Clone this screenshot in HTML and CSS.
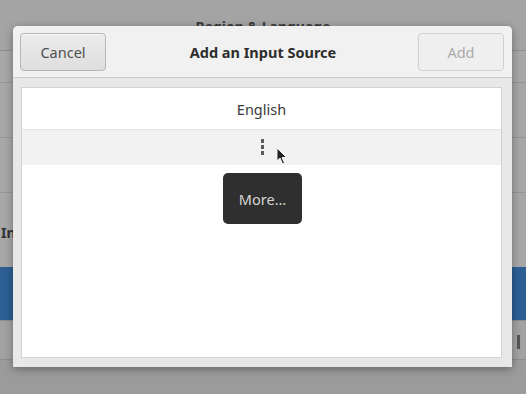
FILE: index.html
```html
<!DOCTYPE HTML>
<html>
  <head>
    <meta charset="utf-8">
    <title>Add an Input Source</title>
    <link rel="stylesheet" href="styles.css">
  </head>
  <body>
    <div class="backdrop">
      <div class="bg-header"><span>Region &amp; Language</span></div>
      <div class="bg-row bg-row-short"></div>
      <div class="bg-row"></div>
      <div class="bg-row"></div>
      <div class="bg-label">Input Sources</div>
      <div class="bg-selected"></div>
      <div class="bg-toolbar"><span class="bg-knob"></span></div>
    </div>

    <div class="dialog">
      <div class="dialog-header">
        <button class="btn">Cancel</button>
        <div class="dialog-title">Add an Input Source</div>
        <button class="btn btn-disabled">Add</button>
      </div>
      <div class="dialog-body">
        <div class="list">
          <div class="list-row">English</div>
          <div class="list-row list-row-hover">
            <span class="dots"><i></i><i></i><i></i></span>
          </div>
        </div>
      </div>
      <div class="tooltip">More&hellip;</div>
      <svg class="cursor" width="13" height="19" viewBox="0 0 13 19">
        <path d="M1 1 L1 14 L4 11 L6.5 17 L8.5 16 L6 10.5 L10.5 10.5 Z" fill="#222" stroke="#f4f4f4" stroke-width="1"/>
      </svg>
    </div>
  </body>
</html>
```

FILE: styles.css
```css
html, body { margin: 0; padding: 0; }
body
{
  width: 526px; height: 394px; overflow: hidden;
  position: relative;
  background-color: #9b9b9b;
  font-family: "Noto Sans", "DejaVu Sans", sans-serif;
  font-size: 14px;
}

/* dimmed settings window behind the dialog */
.backdrop { background-color: #a7a7a7; }
.bg-header
{
  height: 50px; border-bottom: 1px solid #8f8f8f;
  background-color: #a4a4a4;
  display: flex; justify-content: center; align-items: center;
  font-weight: bold; color: #3a3a3a;
}
.bg-header span { margin-top: 2px; }
.bg-row { height: 54px; border-bottom: 1px solid #959595; }
.bg-row-short { height: 31px; }
.bg-label
{
  height: 74px; line-height: 24px; padding-top: 28px; box-sizing: border-box;
  padding-left: 1px;
  font-weight: bold; color: #333;
}
.bg-selected { height: 53px; background-color: #2d5f95; }
.bg-toolbar
{
  height: 38px; border-top: 1px solid #8e8e8e; border-bottom: 1px solid #8e8e8e;
  background-color: #a2a2a2; position: relative;
}
.bg-knob
{
  position: absolute; right: 6px; top: 14px;
  width: 3px; height: 14px; background-color: #555;
}

/* dialog */
.dialog
{
  position: absolute; left: 13px; top: 26px;
  width: 499px; height: 341px;
  background-color: #e8e8e8;
  border-radius: 5px 5px 0 0;
  box-shadow: 0 2px 8px rgba(0,0,0,0.35);
  display: flex; flex-direction: column;
}
.dialog-header
{
  height: 52px; box-sizing: border-box;
  padding: 7px 8px 0 7px;
  background-color: #f1f1f1;
  border-bottom: 1px solid #cbcbcb;
  border-radius: 5px 5px 0 0;
  display: flex; align-items: flex-start; justify-content: space-between;
}
.dialog-title
{
  line-height: 38px; font-weight: bold; color: #2e2e2e; font-size: 14.5px;
  margin-left: 2px;
}
.btn
{
  width: 86px; height: 38px;
  font-family: inherit; font-size: 14.5px; color: #4f4f4f;
  border: 1px solid #b6b6b6; border-radius: 4px;
  background: linear-gradient(#ececec, #dedede);
  box-shadow: inset 0 1px #f8f8f8;
}
.btn-disabled
{
  color: #ababab; background: #efefef; border-color: #d0d0d0;
  box-shadow: none;
}
.dialog-body { flex: 1; padding: 9px 10px 9px 8px; display: flex; }
.list
{
  flex: 1; background-color: #ffffff;
  border: 1px solid #d2d2d2;
}
.list-row
{
  height: 41px; border-bottom: 1px solid #e6e6e6;
  display: flex; align-items: center; justify-content: center;
  color: #3a3a3a; font-size: 14.5px;
}
.list-row-hover { height: 35px; background-color: #f2f2f2; border-bottom: none; }
.dots { display: flex; flex-direction: column; gap: 2px; margin-left: 1px; margin-top: -1px; }
.dots i { display: block; width: 3px; height: 4px; background-color: #5a5a5a; }

.tooltip
{
  position: absolute; left: 210px; top: 147px;
  width: 79px; height: 51px; box-sizing: border-box;
  border-radius: 5px; background-color: #2f2f2f;
  color: #d4d4d4; font-size: 14.5px;
  display: flex; align-items: center; justify-content: center;
}
.cursor { position: absolute; left: 263px; top: 121px; }
```
